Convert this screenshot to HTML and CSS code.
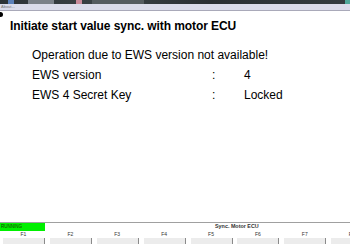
FILE: index.html
```html
<!DOCTYPE html>
<html>
<head>
<meta charset="utf-8">
<link rel="stylesheet" href="styles.css">
</head>
<body>
<div class="screen">
  <div class="topstrip">
    <span class="chip chip-blue"></span>
    <span class="chip chip-gray"></span>
    <span class="chip chip-pink"></span>
    <span class="chip chip-dim"></span>
    <span class="spacer"></span>
    <span class="chip chip-teal"></span>
  </div>
  <div class="menubar"><span class="menu-item">About...</span></div>
  <div class="main">
    <div class="dot"></div>
    <div class="title">Initiate start value sync. with motor ECU</div>
    <div class="rows">
      <div class="msg">Operation due to EWS version not available!</div>
      <div class="label">EWS version</div><div class="colon">:</div><div class="value">4</div>
      <div class="label">EWS 4 Secret Key</div><div class="colon">:</div><div class="value">Locked</div>
    </div>
  </div>
  <div class="footer">
    <div class="status">
      <div class="running">RUNNING</div>
      <div class="caption">Sync. Motor ECU</div>
    </div>
    <div class="fkeys">
      <div class="fkey"><span class="fname">F1</span><span class="fbtn"></span></div>
      <div class="fkey"><span class="fname">F2</span><span class="fbtn"></span></div>
      <div class="fkey"><span class="fname">F3</span><span class="fbtn"></span></div>
      <div class="fkey"><span class="fname">F4</span><span class="fbtn"></span></div>
      <div class="fkey"><span class="fname">F5</span><span class="fbtn"></span></div>
      <div class="fkey"><span class="fname">F6</span><span class="fbtn"></span></div>
      <div class="fkey"><span class="fname">F7</span><span class="fbtn"></span></div>
      <div class="fkey"><span class="fname">F8</span><span class="fbtn"></span></div>
    </div>
  </div>
</div>
</body>
</html>
```
FILE: styles.css
```css
html, body {
  margin: 0;
  padding: 0;
  background: #ffffff;
}
.screen {
  width: 350px;
  height: 244px;
  overflow: hidden;
  display: flex;
  flex-direction: column;
  font-family: "Liberation Sans", Arial, sans-serif;
  color: #000;
}
.topstrip {
  height: 4px;
  background: linear-gradient(90deg, #2c3236 0%, #3a4246 30%, #2a2f33 60%, #343c40 100%);
  display: flex;
  flex-shrink: 0;
}
.chip { height: 4px; display: block; }
.chip-blue { width: 6px; margin-left: 8px; background: #5a7fb8; }
.chip-gray { width: 26px; margin-left: 14px; background: #7a8088; }
.chip-pink { width: 6px; margin-left: 22px; background: #c88a9a; }
.chip-dim { width: 52px; margin-left: 10px; background: #555c60; }
.spacer { flex: 1; }
.chip-teal { width: 5px; background: #4fa89a; }
.menubar {
  height: 6px;
  background: #dadbea;
  border-bottom: 1px solid #a9a9b9;
  flex-shrink: 0;
  display: flex;
  align-items: center;
}
.menu-item {
  font-size: 4px;
  line-height: 6px;
  color: #777;
  padding-left: 1px;
}
.main {
  flex: 1;
  display: flex;
  flex-direction: column;
}
.dot {
  width: 5px;
  height: 5px;
  border-radius: 50%;
  background: #000;
  margin: 1px 0 0 -2px;
}
.title {
  font-size: 12px;
  font-weight: bold;
  line-height: 14px;
  margin-top: 2px;
  padding-left: 10px;
  letter-spacing: -0.08px;
}
.rows {
  display: grid;
  grid-template-columns: 180px 32px auto;
  padding-left: 32px;
  margin-top: 12px;
  font-size: 12px;
  line-height: 20px;
}
.msg { grid-column: 1 / 4; }
.colon { padding-left: 0; }
.footer {
  border-top: 1px solid #a0a0a0;
  flex-shrink: 0;
  height: 21px;
}
.status {
  display: flex;
  height: 8px;
  align-items: stretch;
}
.running {
  width: 45px;
  background: #00f000;
  font-size: 4.5px;
  line-height: 8px;
  color: #1a3a00;
  padding-left: 1px;
  box-sizing: border-box;
}
.caption {
  font-size: 5.4px;
  font-weight: bold;
  line-height: 6px;
  color: #333;
  margin-left: 170px;
}
.fkeys {
  display: grid;
  grid-template-columns: repeat(8, 46.9px);
  width: 376px;
}
.fkey {
  display: flex;
  flex-direction: column;
  align-items: center;
}
.fname {
  font-size: 5px;
  line-height: 7px;
  color: #333;
  height: 7px;
}
.fbtn {
  align-self: flex-start;
  margin-left: 3px;
  width: 41px;
  height: 6px;
  background: #ececec;
  border-right: 1px solid #8a8a8a;
}
```
